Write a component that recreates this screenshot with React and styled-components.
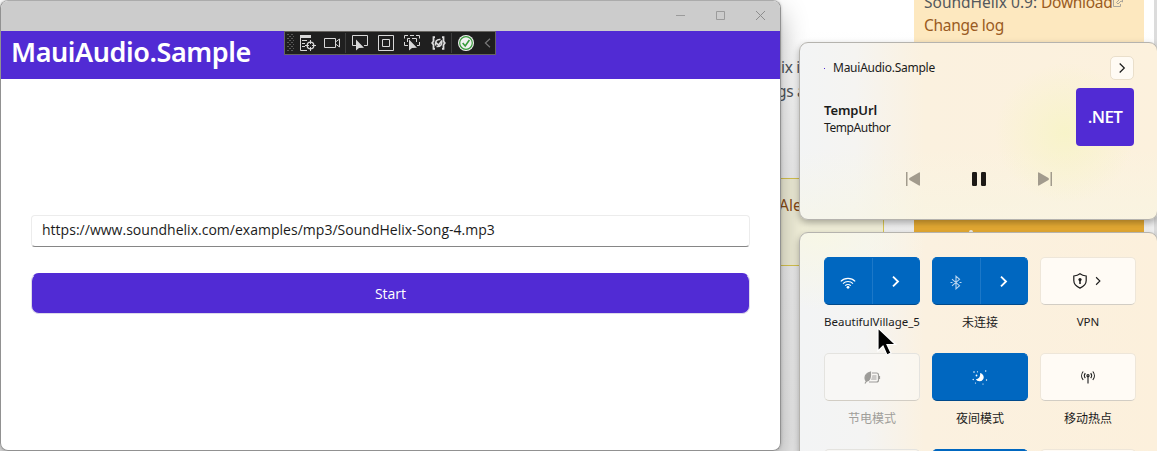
import React from 'react';
import styled, { createGlobalStyle, css } from 'styled-components';

const uiFont = '"Noto Sans", "Open Sans", "Noto Sans CJK SC", sans-serif';
const purple = '#512bd4';
const blue = '#0067c0';

const Global = createGlobalStyle`
  * { box-sizing: border-box; }
  body { margin: 0; overflow: hidden; font-family: ${uiFont}; }
  svg { display: block; flex: none; }
`;

const Desktop = styled.div`
  position: relative;
  width: 1157px;
  height: 451px;
  overflow: hidden;
  background: #fff;
`;

/* ---------- browser page behind the windows ---------- */
const WebPage = styled.div`
  display: flex;
  height: 451px;
  font: 15.5px/24px "Noto Sans", sans-serif;
  color: #50565c;
  background: linear-gradient(#fff 0, #fff 30px, #f1f1f1 180px, #eaeaea 100%);
`;
const Article = styled.div`
  width: 884px;
  padding-top: 55px;
`;
const Paragraph = styled.div`
  height: 123px;
  padding-left: 781px;
  white-space: nowrap;
`;
const Line = styled.div`
  text-indent: ${(p) => p.$indent || 0}px;
  letter-spacing: -0.3px;
`;
const Notice = styled.div`
  height: 88px;
  padding: 14px 0 0 778px;
  border: 1px solid #d9c650;
  background: #f1efd9;
  color: #8a4b14;
`;
const Sidebar = styled.div`
  width: 230px;
  margin-left: 30px;
  display: flex;
  flex-direction: column;
  justify-content: space-between;
`;
const Downloads = styled.div`
  height: 200px;
  padding: 0 0 0 10px;
  margin-top: -10px;
  background: #fde8bf;
  color: #54585c;
  white-space: nowrap;
`;
const DownloadLine = styled.div`
  display: flex;
  align-items: center;
  height: ${(p) => p.$height || 24}px;
  letter-spacing: ${(p) => p.$spacing || 0}px;
`;
const PageLink = styled.span`
  color: #9a5b22;
  letter-spacing: -0.3px;
`;
const Promo = styled.div`
  height: 261px;
  padding: 40px 0 0 55px;
  background: #e5aa33;
`;
const Dot = styled.div`
  width: 4px;
  height: 4px;
  border-radius: 50%;
  background: #eee;
`;
const ScrollTrack = styled.div`
  width: 3px;
  margin-left: 10px;
  background: #dcdcdc;
`;

/* ---------- application window ---------- */
const AppWindow = styled.section`
  position: absolute;
  left: 0;
  top: 0;
  width: 781px;
  height: 451px;
  border: 1px solid #919191;
  border-top-color: #ababab;
  border-radius: 8px;
  overflow: hidden;
  background: #fff;
`;
const WindowShadow = styled.div`
  position: absolute;
  left: 0;
  top: 0;
  width: 781px;
  height: 451px;
  border-radius: 8px;
  box-shadow: 0 12px 28px rgba(0, 0, 0, 0.3), 0 0 3px rgba(0, 0, 0, 0.2);
`;
const TitleBar = styled.header`
  height: 30px;
  display: flex;
  justify-content: flex-end;
  background: #ccc;
`;
const CaptionButton = styled.div`
  width: 40px;
  height: 28px;
  display: grid;
  place-items: center;
`;
const NavBar = styled.div`
  height: 48px;
  padding-left: 10px;
  background: ${purple};
  color: #fff;
  font: 600 27px/42px "Noto Sans", "Open Sans", sans-serif;
  letter-spacing: -0.42px;
`;
const Form = styled.main`
  display: flex;
  flex-direction: column;
  gap: 26px;
  padding: 136px 30px 0 30px;
`;
const UrlField = styled.div`
  height: 32px;
  width: 719px;
  padding-left: 10px;
  border: 1px solid #ececec;
  border-bottom-color: #868686;
  border-radius: 4px;
  color: #1b1b1b;
  font: 14px/28px "Open Sans", sans-serif;
  letter-spacing: 0.016px;
`;
const StartButton = styled.div`
  width: 719px;
  height: 41px;
  border: 1px solid #dcd9ea;
  border-top-color: ${purple};
  border-radius: 8px;
  background: ${purple};
  color: #fff;
  text-align: center;
  font: 14px/40px "Open Sans", sans-serif;
`;

/* ---------- floating debug toolbar ---------- */
const DebugBar = styled.div`
  position: absolute;
  left: 284px;
  top: 31px;
  width: 212px;
  height: 24px;
  display: flex;
  align-items: center;
  border: 1px solid #666460;
  background: #1f1f1f;
`;
const ToolCell = styled.div`
  width: ${(p) => p.$w}px;
  height: 22px;
  display: grid;
  place-items: center;
`;
const ToolDivider = styled.div`
  width: 1px;
  height: 20px;
  background: #3d3d3d;
`;

/* ---------- system flyouts ---------- */
const Flyouts = styled.aside`
  position: absolute;
  left: 799px;
  top: 42px;
  width: 359px;
  display: flex;
  flex-direction: column;
  gap: 12px;
`;
const panel = css`
  border: 1px solid #b5b3ae;
  border-radius: 9px;
  box-shadow: 0 3px 7px rgba(0, 0, 0, 0.3);
`;
const MediaPanel = styled.section`
  ${panel}
  height: 178px;
  padding: 13px 23px 0 24px;
  background:
    radial-gradient(circle at 265px 90px, rgba(247, 244, 198, 0.85), rgba(247, 244, 198, 0) 70px),
    linear-gradient(rgba(246, 246, 230, 0) 60%, rgba(247, 246, 228, 0.55) 100%),
    linear-gradient(90deg, #f3f4f5 0, #f5f4f1 55px, #fbf1df 125px, #fcf1dd 100%);
`;
const MediaHeader = styled.div`
  height: 24px;
  display: flex;
  align-items: center;
  font-size: 12px;
  color: #1b1b1b;
`;
const AppDot = styled.div`
  width: 1px;
  height: 1px;
  margin-right: 8px;
  background: ${purple};
`;
const AppName = styled.div`
  flex: 1;
  padding-bottom: 1px;
  letter-spacing: -0.25px;
`;
const OutputButton = styled.div`
  width: 24px;
  height: 24px;
  display: grid;
  place-items: center;
  border: 1px solid #eadfcb;
  border-radius: 5px;
  background: #fffbf4;
`;
const TrackRow = styled.div`
  display: flex;
  justify-content: space-between;
  margin-top: 8px;
`;
const TrackText = styled.div`
  padding-top: 13px;
  color: #1b1b1b;
`;
const TrackTitle = styled.div`
  font: 600 13px/19px ${uiFont};
  letter-spacing: -0.1px;
`;
const TrackArtist = styled.div`
  font: 12px/16px ${uiFont};
  letter-spacing: -0.4px;
`;
const Cover = styled.div`
  width: 58px;
  height: 58px;
  border-radius: 4px;
  background: ${purple};
  color: #fff;
  text-align: center;
  font: 600 17px/58px "Open Sans", sans-serif;
  letter-spacing: -0.6px;
`;
const Transport = styled.div`
  display: flex;
  justify-content: center;
  gap: 50px;
  margin-top: 25px;
  padding-right: 1px;
`;

const QuickPanel = styled.section`
  ${panel}
  height: 240px;
  padding: 24px 0 0 24px;
  background:
    radial-gradient(ellipse at 20px 0, rgba(248, 247, 229, 0.95) 0, rgba(248, 247, 229, 0) 110px),
    linear-gradient(90deg, #f3f4f5 0, #f4f4f3 65px, #fbf1e0 125px, #fcf0dc 100%);
`;
const TileGrid = styled.div`
  display: grid;
  grid-template-columns: repeat(3, 96px);
  column-gap: 12px;
  grid-auto-rows: 96px;
`;
const TileCell = styled.div`
  display: flex;
  flex-direction: column;
  align-items: center;
`;
const Tile = styled.div`
  width: 96px;
  height: 48px;
  display: flex;
  align-items: center;
  justify-content: center;
  gap: ${(p) => (p.$more ? 5 : 0)}px;
  padding-right: ${(p) => (p.$more ? 2 : 0)}px;
  border: 1px solid ${(p) => (p.$on ? blue : p.$disabled ? '#e4e3df' : '#eee6d9')};
  border-bottom-color: ${(p) => (p.$on ? '#004a8b' : '#d2cdc4')};
  border-radius: 5px;
  background: ${(p) => (p.$on ? blue : p.$disabled ? 'rgba(250,249,246,.65)' : '#fffbf5')};
  color: ${(p) => (p.$on ? '#fff' : p.$disabled ? '#9d9c99' : '#1b1b1b')};
`;
const TileHalf = styled.div`
  flex: 1;
  height: 46px;
  display: grid;
  place-items: center;
  padding-top: 2px;
  & + & { border-left: 1px solid #1c78c8; padding: 0; }
`;
const TileLabel = styled.div`
  padding-top: ${(p) => (p.$size ? 9 : 10)}px;
  font: 12px/16px ${uiFont};
  font-size: ${(p) => p.$size || 12}px;
  letter-spacing: ${(p) => p.$spacing || 0}px;
  white-space: nowrap;
  color: ${(p) => (p.$disabled ? '#a09e9a' : '#1b1b1b')};
`;

const Pointer = styled.svg`
  position: absolute;
  left: 877px;
  top: 327px;
`;

const Chevron = ({ size = 12, width = 1.3 }) => (
  <svg width={size} height={size} viewBox="0 0 12 12" fill="none" stroke="currentColor" strokeWidth={width}>
    <path d="M3.7 1.5 8.3 6l-4.6 4.5" />
  </svg>
);

const toolArrow = 'M0 0 0 11 3 8.4 8 8.2Z';

const GripIcon = () => (
  <svg width="7" height="18" fill="#5a5a5a">
    {[0, 4, 8, 12, 16].map((y) => (
      <g key={y}>
        <path d={`M0 ${y}h2v1h-2zM4 ${y}h2v1h-2z`} />
        {y < 16 && <path d={`M2 ${y + 2}h2v1h-2zM6 ${y + 2}h1v1h-1z`} />}
      </g>
    ))}
  </svg>
);
const TreeIcon = () => (
  <svg width="17" height="17" fill="none" stroke="#d8d8d8">
    <path d="M1 0h11v3H1z" fill="#d8d8d8" stroke="none" />
    <path d="M1.5 3v12.5H8M3 5.5h5M3 8.5h3M3 11.5h3" />
    <circle cx="11.5" cy="10.5" r="3.3" strokeWidth="1.3" />
    <path d="M11.5 5v4M11.5 12v4M6 10.5h4M13 10.5h4" />
  </svg>
);
const CameraIcon = () => (
  <svg width="17" height="12" fill="none" stroke="#d8d8d8">
    <path d="M.5 1.5h11v9H.5zM11.5 5 15.5 2v8L11.5 7" />
  </svg>
);
const SelectIcon = () => (
  <svg width="16" height="16" fill="none" stroke="#d8d8d8">
    <path d="M4 10.5H.5V.5h15v10H12" />
    <path d={toolArrow} transform="translate(4 4.5)" fill="#d8d8d8" stroke="none" />
  </svg>
);
const AdornerIcon = () => (
  <svg width="16" height="16" fill="none" stroke="#d8d8d8">
    <path d="M.5.5h15v15H.5zM4.5 4.5h7v7h-7z" />
  </svg>
);
const FocusIcon = () => (
  <svg width="16" height="16" fill="none" stroke="#d8d8d8">
    <path d="M4 .5H.5v3M.5 7v3.5H4M6 .5h4M12 .5h3.5v3M15.5 7v3.5H13M3.5 7V3.5h2.500M8 3.500h4.500V7" />
    <path d={toolArrow} transform="translate(5 4.5)" fill="#d8d8d8" stroke="none" />
  </svg>
);
const ReloadIcon = () => (
  <svg width="15" height="14" fill="none" stroke="#dedede" strokeWidth="1.8">
    <path d="M4 1.200H2.500v4L1.200 7l1.300 1.800v4H4M11 1.200h1.500v4L13.800 7l-1.300 1.800v4H11" />
    <path d="M4.800 9.500C3.600 6 5.500 3 9.500 3.500M10.500 4.500c1.200 3.500-.8 6.500-5 6M5 6.500 7.500 9 11 4.500" strokeWidth="1.5" />
  </svg>
);
const OkIcon = () => (
  <svg width="16" height="16" fill="none">
    <circle cx="8" cy="8" r="8" fill="#f2f2f2" />
    <circle cx="8" cy="8" r="6.3" stroke="#389b3b" strokeWidth="1.2" />
    <path d="m4.700 8 2.500 3L11.400 5" stroke="#389b3b" strokeWidth="1.6" />
  </svg>
);
const CollapseIcon = () => (
  <svg width="7" height="10" fill="none" stroke="#777" strokeWidth="1.2">
    <path d="M6 .7 1.400 5 6 9.300" />
  </svg>
);

const WifiIcon = () => (
  <svg width="16" height="13" fill="none" stroke="currentColor" strokeWidth="1.15">
    <path d="M.8 5.300a10.200 10.200 0 0 1 14.400 0M3 7.600a7.100 7.100 0 0 1 10 0M5.200 9.700a4 4 0 0 1 5.600 0" />
    <circle cx="8" cy="11.3" r="1.4" fill="currentColor" stroke="none" />
  </svg>
);
const BluetoothIcon = () => (
  <svg width="12" height="15" fill="none" stroke="#b9d5ef" strokeWidth="1.1">
    <path d="M2 4.200 9.500 10.700 6 13.800V1.200l3.500 3.100L2 10.800M.5 7.500h2M9.500 7.500h2" />
  </svg>
);
const ShieldIcon = () => (
  <svg width="16" height="16" fill="none" stroke="currentColor" strokeWidth="1.2">
    <path d="M8 .8c1.800 1.400 3.800 2 6.200 2.200v4.600c0 3.500-2.300 5.900-6.200 7.500-3.900-1.600-6.200-4-6.200-7.500V3C4.200 2.800 6.200 2.200 8 .8Z" />
    <circle cx="8" cy="6.6" r="1.6" fill="currentColor" stroke="none" />
    <path d="M8 7v4" strokeWidth="1.5" />
  </svg>
);
const SaverIcon = () => (
  <svg width="17" height="13" fill="none" stroke="currentColor" strokeWidth="1.2">
    <path d="M6.500 1C3 2 1 4 1 7c0 1.500.6 2.500 1.500 3.200C5.500 10 7 7 6.500 1Z" fill="currentColor" />
    <path d="M1 12.500 5 6M8 2h4.500a2 2 0 0 1 2 2v5a2 2 0 0 1-2 2H5M15.500 5v3" />
    <path d="M8.500 4h4v5H7Z" fill="currentColor" opacity=".5" stroke="none" />
  </svg>
);
const NightIcon = () => (
  <svg width="16" height="16" fill="currentColor">
    <path d="M8 4a4.200 4.200 0 1 1-4.200 6.200C7 10.300 8.700 7.500 8 4Z" />
    <circle cx="2" cy="3" r=".8" />
    <circle cx="5.5" cy="2.8" r=".6" />
    <circle cx="4.5" cy="6.5" r=".9" />
    <circle cx="1.2" cy="10.5" r=".7" />
    <circle cx="13.7" cy="2" r=".7" />
    <circle cx="14.5" cy="11" r=".7" />
    <circle cx="3.5" cy="14" r=".6" />
    <circle cx="11" cy="15" r=".6" />
  </svg>
);
const HotspotIcon = () => (
  <svg width="16" height="14" fill="none" stroke="currentColor" strokeWidth="1.1">
    <path d="M3.200 1.500a6.500 6.500 0 0 0 0 8.500M5.300 3.200a4 4 0 0 0 0 5M12.800 1.500a6.500 6.500 0 0 1 0 8.500M10.700 3.200a4 4 0 0 1 0 5M8 6v7.500" />
    <circle cx="8" cy="5.7" r="1.1" />
  </svg>
);

const tiles = [
  { label: 'BeautifulVillage_5', icon: <WifiIcon />, on: true, split: true, size: 11.5, spacing: -0.02 },
  { label: '未连接', icon: <BluetoothIcon />, on: true, split: true },
  { label: 'VPN', icon: <ShieldIcon />, more: true, size: 11.5 },
  { label: '节电模式', icon: <SaverIcon />, disabled: true },
  { label: '夜间模式', icon: <NightIcon />, on: true },
  { label: '移动热点', icon: <HotspotIcon /> },
  { disabled: true },
  { on: true },
  {},
];

function QuickTile({ label, icon, on, split, more, disabled, size, spacing }) {
  return (
    <TileCell>
      <Tile $on={on} $more={more} $disabled={disabled}>
        {split ? (
          <>
            <TileHalf>{icon}</TileHalf>
            <TileHalf><Chevron size={13} width={1.7} /></TileHalf>
          </>
        ) : (
          <>
            {icon}
            {more && <Chevron size={10} width={1.3} />}
          </>
        )}
      </Tile>
      {label && <TileLabel $disabled={disabled} $size={size} $spacing={spacing}>{label}</TileLabel>}
    </TileCell>
  );
}

export default function App() {
  return (
    <Desktop>
      <Global />
      <WebPage>
        <Article>
          <Paragraph>
            <Line>ix is</Line>
            <Line $indent={-4}>gs an</Line>
          </Paragraph>
          <Notice>Alex</Notice>
        </Article>
        <Sidebar>
          <Downloads>
            <DownloadLine $height={23}>
              SoundHelix 0.9:&nbsp;<PageLink>Download</PageLink>
              <svg width="12" height="12" fill="none" stroke="#a9a49a">
                <path d="M5 3.500H1.500v7h7V8M5 1.500h5.500V6L9 5 6 8 4.500 6.500l3-3Z" />
              </svg>
            </DownloadLine>
            <DownloadLine><PageLink>Change log</PageLink></DownloadLine>
          </Downloads>
          <Promo><Dot /></Promo>
        </Sidebar>
        <ScrollTrack />
      </WebPage>

      <WindowShadow />
      <AppWindow>
        <TitleBar>
          <CaptionButton>
            <svg width="9" height="9" stroke="#9b9b9b"><path d="M0 4.500h9" /></svg>
          </CaptionButton>
          <CaptionButton>
            <svg width="9" height="9" fill="none" stroke="#9b9b9b"><path d="M.5.5h8v8h-8z" /></svg>
          </CaptionButton>
          <CaptionButton>
            <svg width="9" height="9" stroke="#8d8d8d"><path d="m0 0 9 9M9 0 0 9" /></svg>
          </CaptionButton>
        </TitleBar>
        <NavBar>MauiAudio.Sample</NavBar>
        <Form>
          <UrlField>https://www.soundhelix.com/examples/mp3/SoundHelix-Song-4.mp3</UrlField>
          <StartButton>Start</StartButton>
        </Form>
      </AppWindow>

      <DebugBar>
        <ToolCell $w={10}><GripIcon /></ToolCell>
        <ToolCell $w={24}><TreeIcon /></ToolCell>
        <ToolCell $w={26}><CameraIcon /></ToolCell>
        <ToolDivider />
        <ToolCell $w={28}><SelectIcon /></ToolCell>
        <ToolCell $w={24}><AdornerIcon /></ToolCell>
        <ToolCell $w={28}><FocusIcon /></ToolCell>
        <ToolCell $w={25}><ReloadIcon /></ToolCell>
        <ToolDivider />
        <ToolCell $w={27}><OkIcon /></ToolCell>
        <ToolCell $w={16}><CollapseIcon /></ToolCell>
      </DebugBar>

      <Flyouts>
        <MediaPanel>
          <MediaHeader>
            <AppDot />
            <AppName>MauiAudio.Sample</AppName>
            <OutputButton><Chevron size={12} width={1.2} /></OutputButton>
          </MediaHeader>
          <TrackRow>
            <TrackText>
              <TrackTitle>TempUrl</TrackTitle>
              <TrackArtist>TempAuthor</TrackArtist>
            </TrackText>
            <Cover>.NET</Cover>
          </TrackRow>
          <Transport>
            <svg width="16" height="16" fill="#a29b8d">
              <path d="M1 1h1.500v14H1zM15 2v12q0 1-1 .5L4.500 9q-1-1 0-2L14 1.500q1-.5 1 .5Z" />
            </svg>
            <svg width="16" height="16" fill="#1d1a16">
              <rect x="1" y="1" width="5" height="14" rx="1.2" />
              <rect x="10" y="1" width="5" height="14" rx="1.2" />
            </svg>
            <svg width="16" height="16" fill="#a29b8d">
              <path d="M13.500 1H15v14h-1.500zM1 2v12q0 1 1 .5L11.500 9q1-1 0-2L2 1.500Q1 1 1 2Z" />
            </svg>
          </Transport>
        </MediaPanel>
        <QuickPanel>
          <TileGrid>
            {tiles.map((tile, i) => <QuickTile key={i} {...tile} />)}
          </TileGrid>
        </QuickPanel>
      </Flyouts>

      <Pointer width="21" height="31" viewBox="0 0 21 31">
        <path d="M1 1v23l5-5 4 9 4-2-4-8.500h8.500Z" fill="#000" stroke="#fff" strokeWidth="1.2" />
      </Pointer>
    </Desktop>
  );
}
